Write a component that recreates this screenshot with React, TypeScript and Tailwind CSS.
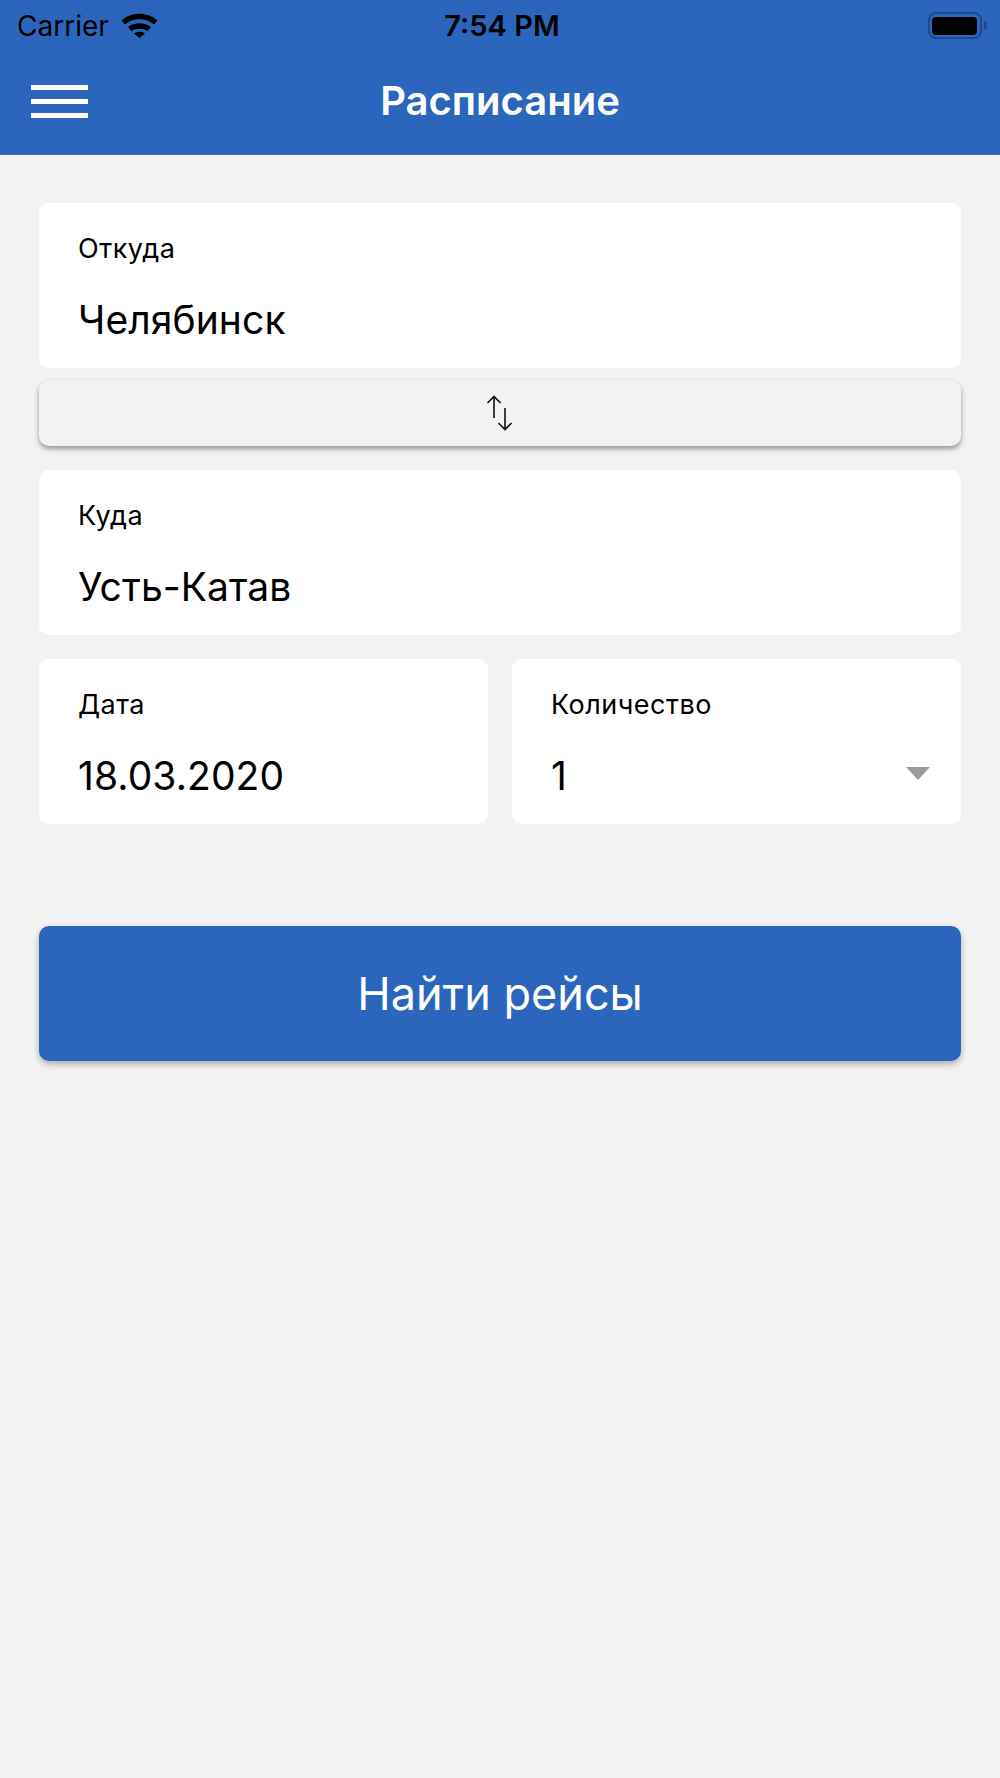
const font = "font-['Inter','Noto_Sans',sans-serif]";

function Field({ label, value, className = "", children }: { label: string; value: string; className?: string; children?: React.ReactNode }) {
  return (
    <div className={`relative h-[165px] rounded-[10px] bg-white pl-[39px] ${className}`}>
      <div className="pt-[31px] text-[27px] leading-[30px] tracking-[0.5px] text-black">{label}</div>
      <div className="pt-[33px] text-[39px] leading-[46px] tracking-[0.1px] text-black">{value}</div>
      {children}
    </div>
  );
}

export default function App() {
  return (
    <div className={`flex h-[1778px] w-[1000px] flex-col overflow-hidden bg-[#f2f2f2] ${font}`}>
      <header className="h-[155px] shrink-0 border-b border-[#3f6cb0] bg-[#2b66bc]">
        <div className="flex h-[50px] items-center justify-between pt-[1px] pr-[13px] pl-[17px]">
          <div className="flex w-[200px] items-center gap-[12px]">
            <span className="text-[28px] leading-[32px] text-black">Carrier</span>
            <svg width="37" height="27" viewBox="0 0 37 27" fill="none" className="-mt-[3px] shrink-0">
              <path d="M0.5 9.5C10 0.5 27 0.5 36.5 9.5L33 13.5C25 6.5 12 6.5 4 13.5Z" fill="#000" />
              <path d="M7 16C13 11 24 11 30 16L26.5 20C22 17 15 17 10.5 20Z" fill="#000" />
              <path d="M13 22.5C16 20 21 20 24 22.5L18.5 27Z" fill="#000" />
            </svg>
          </div>
          <span className="text-[29px] font-semibold leading-[32px] text-black">7:54 PM</span>
          <div className="flex w-[200px] items-center justify-end">
            <div className="flex h-[27px] w-[54px] items-center justify-center rounded-[8px] border-[2px] border-[#1c4a8c]">
              <div className="h-[18px] w-[45px] rounded-[4px] bg-black" />
            </div>
            <div className="ml-[2px] h-[9px] w-[3px] rounded-r-[3px] bg-[#1c4a8c]" />
          </div>
        </div>
        <div className="relative flex h-[104px] items-center justify-center pb-[2px]">
          <div className="absolute top-[35px] left-[31px] flex h-[33px] w-[57px] flex-col justify-between">
            <div className="h-[5px] bg-white" />
            <div className="h-[5px] bg-white" />
            <div className="h-[5px] bg-white" />
          </div>
          <h1 className="text-[40px] font-semibold leading-[44px] text-white">Расписание</h1>
        </div>
      </header>

      <main className="flex flex-col px-[39px] pt-[48px]">
        <Field label="Откуда" value="Челябинск" />
        <button className="mt-[12px] flex h-[66px] items-center justify-center rounded-[10px] bg-[#f2f2f2] shadow-[0_3px_5px_rgba(0,0,0,0.38)]">
          <svg width="28" height="36" viewBox="0 0 28 36" fill="none" stroke="#111" strokeWidth="1.6">
            <path d="M8 23V1M1.5 8L8 1.5L14.5 8" />
            <path d="M19 13V35M12.5 28L19 34.5L25.5 28" />
          </svg>
        </button>
        <Field label="Куда" value="Усть-Катав" className="mt-[24px]" />
        <div className="mt-[24px] flex gap-[24px]">
          <Field label="Дата" value="18.03.2020" className="flex-1" />
          <Field label="Количество" value="1" className="flex-1">
            <svg width="24" height="13" viewBox="0 0 24 13" className="absolute top-[108px] right-[31px]">
              <path d="M0 0H24L12 13Z" fill="#9b9b9b" />
            </svg>
          </Field>
        </div>
        <button className="mt-[102px] h-[135px] rounded-[10px] bg-[#2b66bc] text-[45px] text-white shadow-[0_3px_6px_rgba(0,0,0,0.3)]">
          Найти рейсы
        </button>
      </main>
    </div>
  );
}
